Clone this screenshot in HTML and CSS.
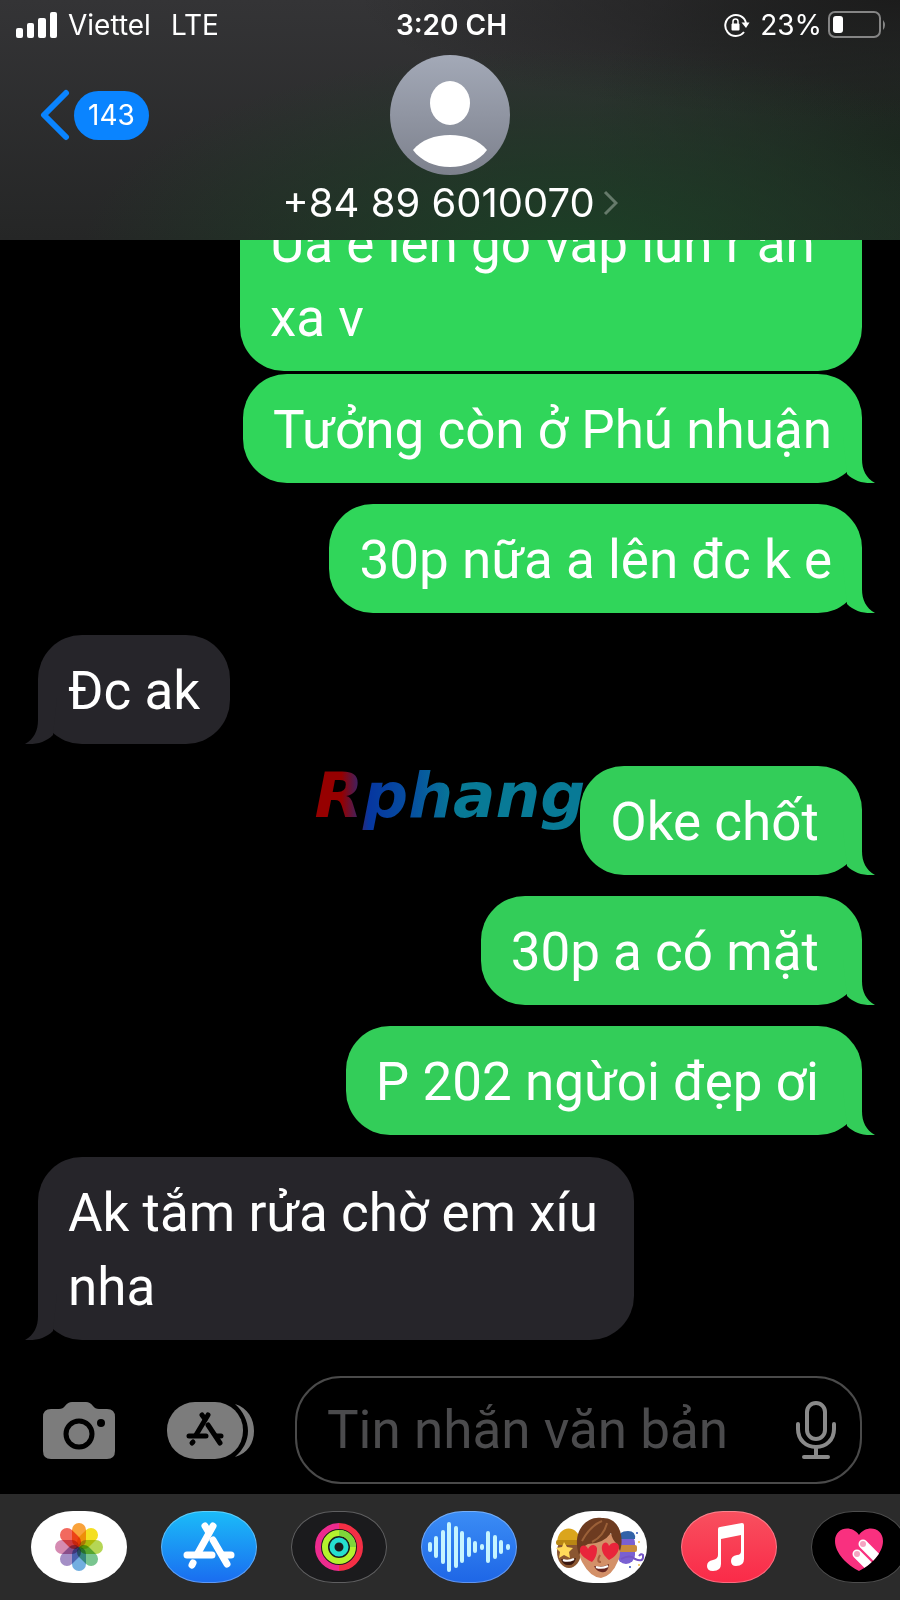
FILE: index.html
```
<!DOCTYPE html>
<html lang="vi">
<head>
  <meta charset="UTF-8">
  <meta name="viewport" content="width=device-width, initial-scale=1.0">
  <title>+84 89 6010070</title>
  <link rel="stylesheet" href="styles.css">
</head>
<body>
  <header class="header">
    <div class="status">
      <div class="status-left">
        <svg class="signal" width="42" height="26" viewBox="0 0 42 26" fill="#fff">
          <rect x="0" y="16" width="7" height="10" rx="2"/>
          <rect x="11" y="11" width="7" height="15" rx="2"/>
          <rect x="22" y="6" width="8" height="20" rx="2"/>
          <rect x="34" y="0" width="7" height="26" rx="2"/>
        </svg>
        <span>Viettel</span>
        <span class="network">LTE</span>
      </div>
      <div class="clock">3:20 CH</div>
      <div class="status-right">
        <svg width="26" height="24" viewBox="0 0 26 24" fill="none" stroke="#fff" stroke-width="2">
          <path d="M20 19 A10.500 10.500 0 1 1 22 10"/>
          <path d="M17.500 9.500 H25.500 L22 15 Z" fill="#fff" stroke="none"/>
          <rect x="7.500" y="10.500" width="8" height="7" rx="1" fill="#fff" stroke="none"/>
          <path d="M9 11 V8.500 a2.500 2.500 0 0 1 5 0 V11" stroke-width="1.500"/>
        </svg>
        <span>23%</span>
        <svg class="battery" width="59" height="28" viewBox="0 0 59 28">
          <rect x="1" y="1" width="51" height="25" rx="6" fill="none" stroke="#858585" stroke-width="2"/>
          <rect x="5" y="5" width="10" height="17" rx="3" fill="#fff"/>
          <path d="M55 9 q4 5 0 10 z" fill="#858585"/>
        </svg>
      </div>
    </div>

    <div class="contact-bar">
      <a class="back" href="#" aria-label="143">
        <svg width="30" height="52" viewBox="0 0 30 52" fill="none" stroke="#0a84ff" stroke-width="6" stroke-linecap="round" stroke-linejoin="round">
          <path d="M26 4 L4 26 L26 48"/>
        </svg>
        <span class="badge">143</span>
      </a>
      <a class="contact" href="#">
        <svg class="avatar" width="120" height="120" viewBox="0 0 120 120">
          <defs>
            <linearGradient id="avatar-bg" x1="0" y1="0" x2="0" y2="1">
              <stop offset="0" stop-color="#a3a9b7"/>
              <stop offset="1" stop-color="#7d818d"/>
            </linearGradient>
          </defs>
          <circle cx="60" cy="60" r="60" fill="url(#avatar-bg)"/>
          <ellipse cx="60" cy="48" rx="20" ry="22" fill="#fff"/>
          <path d="M23 95 C31 85 45 80 60 80 S89 85 97 95 C89 106 75 112 60 112 S31 106 23 95 Z" fill="#fff"/>
        </svg>
        <span class="number">+84 89 6010070
          <svg width="15" height="26" viewBox="0 0 15 26" fill="none" stroke="#667a6b" stroke-width="3">
            <path d="M2 2 L13 13 L2 24"/>
          </svg>
        </span>
      </a>
    </div>
  </header>

  <main class="thread">
    <p class="bubble sent joined">Ủa e lên gò vấp lun r ăn xa v</p>
    <p class="bubble sent tail">Tưởng còn ở Phú nhuận</p>
    <p class="bubble sent tail">30p nữa a lên đc k e</p>
    <p class="bubble received tail">Đc ak</p>
    <p class="bubble sent tail later">Oke chốt&nbsp;</p>
    <p class="bubble sent tail later">30p a có mặt&nbsp;</p>
    <p class="bubble sent tail later">P 202 ngừoi đẹp ơi&nbsp;</p>
    <p class="bubble received tail">Ak tắm rửa chờ em xíu nha</p>
  </main>

  <div class="watermark">Rphang</div>

  <form class="composer">
    <button type="button" class="icon-button" aria-label="Camera">
      <svg width="72" height="57" viewBox="0 0 72 57">
        <path d="M8 7 H16 Q20 7 22 4 Q25 0 29 0 H43 Q47 0 50 4 Q52 7 56 7 H64 Q72 7 72 15 V49 Q72 57 64 57 H8 Q0 57 0 49 V15 Q0 7 8 7 Z" fill="#7c7c7c"/>
        <circle cx="36" cy="32" r="13" fill="none" stroke="#000" stroke-width="5"/>
        <circle cx="58" cy="21" r="4" fill="#000"/>
      </svg>
    </button>
    <button type="button" class="icon-button" aria-label="App Store">
      <svg width="88" height="57" viewBox="0 0 88 57">
        <path d="M68 2 C81 6 87 17 87 29 S81 51 68 55 C76 48 81 39 81 29 S76 9 68 2 Z" fill="#7c7c7c"/>
        <rect x="0" y="0" width="76" height="57" rx="28" fill="#7c7c7c"/>
        <g fill="none" stroke="#000" stroke-width="5" stroke-linecap="round">
          <path d="M41 13 L29 33"/>
          <path d="M35 13 L38 17"/>
          <path d="M41 23 L53 41"/>
          <path d="M22 34 H39 M50 34 H54"/>
          <path d="M26 40 L25 41"/>
        </g>
      </svg>
    </button>
    <div class="field">
      <input type="text" aria-label="Tin nhắn văn bản" placeholder="Tin nhắn văn bản">
      <button type="button" class="icon-button" aria-label="Micro">
        <svg width="40" height="58" viewBox="0 0 40 58" fill="none" stroke="#8a8a8a" stroke-width="4" stroke-linecap="round">
          <rect x="11" y="2" width="18" height="36" rx="9"/>
          <path d="M2 23 V28 C2 39 10 46 20 46 S38 39 38 28 V23"/>
          <path d="M20 46 V55 M8 56 H32"/>
        </svg>
      </button>
    </div>
  </form>

  <nav class="dock">
    <button class="app app-photos" aria-label="Ảnh">
      <svg width="96" height="72" viewBox="0 0 96 72">
        <g class="petals">
          <rect x="41" y="12" width="14" height="24" rx="7" fill="#f9a23b"/>
          <rect x="41" y="12" width="14" height="24" rx="7" fill="#f4df22" transform="rotate(45 48 36)"/>
          <rect x="41" y="12" width="14" height="24" rx="7" fill="#b5d655" transform="rotate(90 48 36)"/>
          <rect x="41" y="12" width="14" height="24" rx="7" fill="#79c58f" transform="rotate(135 48 36)"/>
          <rect x="41" y="12" width="14" height="24" rx="7" fill="#72aee0" transform="rotate(180 48 36)"/>
          <rect x="41" y="12" width="14" height="24" rx="7" fill="#a48fc6" transform="rotate(225 48 36)"/>
          <rect x="41" y="12" width="14" height="24" rx="7" fill="#d58bb2" transform="rotate(270 48 36)"/>
          <rect x="41" y="12" width="14" height="24" rx="7" fill="#f2695e" transform="rotate(315 48 36)"/>
        </g>
      </svg>
    </button>
    <button class="app app-store" aria-label="App Store">
      <svg width="96" height="72" viewBox="0 0 96 72" fill="none" stroke="#fff" stroke-width="7" stroke-linecap="round">
        <path d="M52 15 L37 42"/>
        <path d="M44 15 L47 20"/>
        <path d="M52 29 L66 53"/>
        <path d="M26 44 H51 M63 44 H70"/>
        <path d="M32 52 L31 54"/>
      </svg>
    </button>
    <button class="app app-activity" aria-label="Hoạt động">
      <svg width="96" height="72" viewBox="0 0 96 72" fill="none" stroke-width="6">
        <path d="M48 15 A21 21 0 0 0 48 57" stroke="#ed2b8e"/>
        <path d="M48 15 A21 21 0 0 1 48 57" stroke="#f42f45"/>
        <circle cx="48" cy="36" r="14" stroke="#b4f32d"/>
        <path d="M48 22 A14 14 0 0 1 62 36" stroke="#7fd63a"/>
        <circle cx="48" cy="36" r="7" stroke="#25dfd0" stroke-width="5"/>
      </svg>
    </button>
    <button class="app app-audio" aria-label="Âm thanh">
      <svg width="96" height="72" viewBox="0 0 96 72" fill="none" stroke="#c5f4ff" stroke-width="4" stroke-linecap="round">
        <path d="M9 33 V39 M15 27 V45 M22 21 V51 M28 13 V59 M35 17 V55 M41 22 V50 M48 28 V44 M54 32 V40 M61 35 V37 M67 22 V50 M74 26 V46 M80 31 V41 M87 35 V37"/>
      </svg>
    </button>
    <button class="app app-memoji" aria-label="Memoji">
      <svg width="96" height="72" viewBox="0 0 96 72">
        <!-- left face with beanie and star eyes -->
        <ellipse cx="18" cy="41" rx="12" ry="16" fill="#8a5631"/>
        <path d="M6 34 C5 12 30 12 30 34 Z" fill="#dba51c"/>
        <rect x="5" y="29" width="25" height="5" rx="2" fill="#b98713"/>
        <path d="M13 31 l3 5 6 1 -4 4 1 6 -6 -3 -5 3 1 -6 -4 -4 6 -1 z" fill="#ffd95a"/>
        <path d="M10 48 Q17 51 25 47 Q23 55 17 54 Q12 54 10 48 Z" fill="#3a1710"/>
        <path d="M12 49 Q17 51 23 48" stroke="#fff" stroke-width="2" fill="none"/>
        <!-- right blue face with glasses and moustache -->
        <rect x="66" y="23" width="18" height="30" rx="9" fill="#7960d2"/>
        <path d="M68 28 Q67 20 77 20 Q85 20 84 28 Z" fill="#3262a8"/>
        <rect x="68" y="34" width="18" height="7" rx="2" fill="#c88b3c"/>
        <path d="M70 48 Q79 43 84 48 Q93 52 92 44 Q90 42 88 45" fill="none" stroke="#7354c5" stroke-width="2"/>
        <circle cx="86" cy="22" r="1" fill="#3454b8"/>
        <circle cx="88" cy="31" r="1" fill="#efbd49"/>
        <circle cx="79" cy="56" r="1" fill="#3454b8"/>
        <circle cx="88" cy="54" r="1" fill="#efbd49"/>
        <!-- middle face with heart eyes -->
        <path d="M29 30 Q27 45 31 51 Q39 66 50 67 Q61 65 67 50 Q71 42 68 27 Q49 15 29 30 Z" fill="#d39068"/>
        <path d="M28 44 C20 20 36 4 51 7 C67 6 74 24 69 40 L65 32 Q61 28 60 22 Q52 33 37 33 Q31 36 28 44 Z" fill="#6d3b20"/>
        <path d="M31 30 Q39 15 51 10 M41 31 Q53 25 56 12" fill="none" stroke="#9b6038" stroke-width="2"/>
        <path d="M41 51 C32 47 28 42 29 38 C30 33 36 34 37 38 C40 31 47 34 46 39 C46 43 44 48 41 51 Z" fill="#e9253b"/>
        <path d="M58 49 C53 45 50 40 51 35 C53 30 57 31 58 35 C61 30 68 31 68 36 C68 41 64 46 58 49 Z" fill="#e9253b"/>
        <path d="M49 44 Q45 51 50 51" fill="none" stroke="#a8603e" stroke-width="2"/>
        <path d="M43 55 Q51 57 58 53 Q57 63 50 61 Q45 60 43 55 Z" fill="#692822"/>
        <path d="M45 56 Q51 58 57 55" stroke="#fff" stroke-width="2" fill="none"/>
      </svg>
    </button>
    <button class="app app-music" aria-label="Nhạc">
      <svg width="96" height="72" viewBox="0 0 96 72" fill="#fff">
        <path d="M37 18 Q37 16 39 16 L61 12 Q63 12 63 14 V48 Q63 55 55 55 Q50 55 50 50 Q50 45 56 44 Q60 44 60 40 V24 L40 28 V53 Q40 60 32 60 Q26 60 26 55 Q26 50 32 49 Q37 48 37 44 Z"/>
      </svg>
    </button>
    <button class="app app-touch" aria-label="Digital Touch">
      <svg width="96" height="72" viewBox="0 0 96 72">
        <defs>
          <clipPath id="heart">
            <path d="M48 60 C36 54 24 42 24 30 C24 17 40 13 48 24 C56 13 72 17 72 30 C72 42 60 54 48 60 Z"/>
          </clipPath>
        </defs>
        <g clip-path="url(#heart)">
          <rect width="96" height="72" fill="#f9307f"/>
          <path d="M52 33 L72 53 M46 43 L63 60" stroke="#fff" stroke-width="9" stroke-linecap="round"/>
          <circle cx="52" cy="33" r="3" fill="#f5a3c1"/>
          <circle cx="46" cy="43" r="3" fill="#f5a3c1"/>
        </g>
      </svg>
    </button>
  </nav>
</body>
</html>
```
FILE: styles.css
```
* {
  box-sizing: border-box;
}

body {
  position: relative;
  display: flex;
  flex-direction: column;
  height: 100vh;
  margin: 0;
  overflow: hidden;
  background: #000;
  color: #fff;
  font-family: Inter, "Liberation Sans", sans-serif;
}

button {
  padding: 0;
  border: 0;
  background: none;
}

svg {
  display: block;
  flex: none;
}

a {
  color: inherit;
  text-decoration: none;
}

/* header */
.header {
  flex: none;
  height: 240px;
  background:
    radial-gradient(ellipse 55% 85% at 64% 105%, #1c4026 0%, rgba(28, 64, 38, 0) 100%),
    radial-gradient(ellipse 60% 50% at 100% 0%, #1c1c1c 0%, rgba(28, 28, 28, 0) 100%),
    radial-gradient(ellipse 35% 90% at 100% 60%, #1c241e 0%, rgba(28, 36, 30, 0) 100%),
    linear-gradient(to bottom, #343436, #252626);
}

.status {
  display: grid;
  grid-template-columns: 1fr auto 1fr;
  align-items: center;
  height: 50px;
  padding: 0 13px 0 16px;
  font-size: 28px;
}

.status-left,
.status-right {
  display: flex;
  align-items: center;
  gap: 10px;
}

.status-right {
  justify-content: flex-end;
}

.network {
  margin-left: 10px;
}

.battery {
  margin-left: -4px;
}

.clock {
  font-weight: 600;
}

.contact-bar {
  display: grid;
  grid-template-columns: 1fr auto 1fr;
  padding: 5px 40px 0;
}

.back {
  display: flex;
  align-items: center;
  align-self: start;
  gap: 4px;
  height: 120px;
}

.badge {
  padding: 0 14px;
  border-radius: 25px;
  background: #0a84ff;
  font-size: 28px;
  line-height: 49px;
}

.contact {
  display: flex;
  flex-direction: column;
  align-items: center;
}

.number {
  display: flex;
  align-items: center;
  gap: 8px;
  font-size: 40px;
  line-height: 56px;
}

/* messages */
.thread {
  display: flex;
  flex: 1;
  flex-direction: column;
  justify-content: flex-end;
  min-height: 0;
  padding: 0 38px 36px;
  overflow: hidden;
}

.bubble {
  position: relative;
  flex: none;
  max-width: 622px;
  margin: 0 0 21px;
  padding: 19px 30px 16px;
  border-radius: 44px;
  font-family: Roboto, "Liberation Sans", sans-serif;
  font-size: 53px;
  line-height: 74px;
}

.bubble:last-child {
  margin-bottom: 0;
}

.sent {
  align-self: flex-end;
  background: #30d65a;
}

.later {
  background: #33cd59;
}

.received {
  align-self: flex-start;
  max-width: 596px;
  margin: 1px 0 22px;
  background: #26252a;
}

.joined {
  margin-bottom: 3px;
}

.tail::after {
  content: "";
  position: absolute;
  bottom: 0;
  width: 32px;
  height: 46px;
  background: inherit;
  clip-path: path("M13 0 V22 C13 33 9 41 0 46 C11 47 21 44 28 37 L32 0 Z");
}

.received::after {
  left: -13px;
}

.sent::after {
  right: -13px;
  transform: scaleX(-1);
}

.watermark {
  position: absolute;
  top: 50%;
  left: 50%;
  padding-bottom: 10px;
  transform: translate(-50%, -50%);
  background: linear-gradient(to right, #960000 10%, #0636a0 20%, #0650a0 36%, #087a96 52%, #087a96);
  background-clip: text;
  color: transparent;
  font-family: "DejaVu Sans", sans-serif;
  font-size: 63px;
  font-style: italic;
  font-weight: bold;
  pointer-events: none;
}

/* composer */
.composer {
  display: flex;
  flex: none;
  align-items: center;
  padding: 0 38px 10px 43px;
}

.composer > .icon-button + .icon-button {
  margin-left: 52px;
}

.field {
  display: flex;
  flex: 1;
  align-items: center;
  min-width: 0;
  height: 108px;
  margin-left: 40px;
  padding: 0 24px 0 30px;
  border: 2px solid #4a4a4a;
  border-radius: 46px;
}

.field input {
  flex: 1;
  min-width: 0;
  padding: 0;
  border: 0;
  outline: 0;
  background: none;
  color: #fff;
  font-family: Roboto, "Liberation Sans", sans-serif;
  font-size: 53px;
  line-height: 74px;
}

.field input::placeholder {
  color: #4b4b4d;
  opacity: 1;
}

/* app dock */
.dock {
  display: flex;
  flex: none;
  gap: 34px;
  height: 106px;
  padding: 17px 0 0 31px;
  overflow: hidden;
  background: #2b2b2b;
}

.app {
  flex: none;
  width: 96px;
  height: 72px;
  border-radius: 42px / 36px;
  overflow: hidden;
  box-shadow: inset 0 0 0 1px rgba(255, 255, 255, 0.3);
}

.app-photos,
.app-memoji {
  background: #fff;
}

.petals rect {
  mix-blend-mode: multiply;
}

.app-store {
  background: linear-gradient(#1bbcf8, #1a6cf0);
}

.app-activity {
  background: #1b1b1d;
}

.app-audio {
  background: linear-gradient(#3b8df5, #1e66e6);
}

.app-music {
  background: linear-gradient(#f8505f, #fa2a48);
}

.app-touch {
  background: #000;
}
```
